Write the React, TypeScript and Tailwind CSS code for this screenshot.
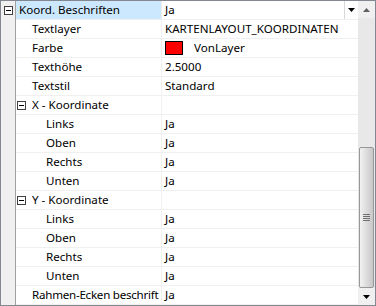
import { ReactNode } from 'react';

type Row = {
  label: string;
  value?: ReactNode;
  indent: number;
  toggle?: 'strip' | 'inline';
  selected?: boolean;
  tight?: boolean;
};

const rows: Row[] = [
  { label: 'Koord. Beschriften', value: 'Ja', indent: 3, toggle: 'strip', selected: true },
  { label: 'Textlayer', value: 'KARTENLAYOUT_KOORDINATEN', indent: 16 },
  { label: 'Farbe', value: 'swatch', indent: 16 },
  { label: 'Texthöhe', value: '2.5000', indent: 16 },
  { label: 'Textstil', value: 'Standard', indent: 16 },
  { label: 'X - Koordinate', indent: 16, toggle: 'inline' },
  { label: 'Links', value: 'Ja', indent: 30 },
  { label: 'Oben', value: 'Ja', indent: 30 },
  { label: 'Rechts', value: 'Ja', indent: 30 },
  { label: 'Unten', value: 'Ja', indent: 30 },
  { label: 'Y - Koordinate', indent: 16, toggle: 'inline' },
  { label: 'Links', value: 'Ja', indent: 30 },
  { label: 'Oben', value: 'Ja', indent: 30 },
  { label: 'Rechts', value: 'Ja', indent: 30 },
  { label: 'Unten', value: 'Ja', indent: 30 },
  { label: 'Rahmen-Ecken beschrift', value: 'Ja', indent: 16, tight: true },
];

function MinusBox() {
  return (
    <span className="flex items-center justify-center w-[9px] h-[9px] border border-[#404040] bg-white">
      <span className="block w-[5px] h-px bg-black" />
    </span>
  );
}

function ArrowDown() {
  return (
    <svg width="7" height="4" viewBox="0 0 7 4">
      <path d="M0 0h7L3.5 4z" fill="#000" />
    </svg>
  );
}

export default function App() {
  return (
    <div
      className="w-[376px] h-[306px] border border-[#828790] bg-white flex overflow-hidden text-[11.6px] text-black"
      style={{ fontFamily: '"Noto Sans", "DejaVu Sans", sans-serif' }}
    >
      <div className="flex-1 flex flex-col">
        {rows.map((row, i) => (
          <div key={i} className="flex h-[19px] shrink-0">
            <div className="w-[15px] shrink-0 bg-[#f0f0f0] border-r border-[#a0a0a0] flex items-center justify-center">
              {row.toggle === 'strip' && <MinusBox />}
            </div>
            <div
              className={
                'w-[146px] shrink-0 flex items-center border-r border-b border-[#f0f0f0] whitespace-nowrap overflow-hidden ' +
                (row.selected ? 'bg-[#cce8ff]' : '')
              }
              style={{ paddingLeft: row.indent }}
            >
              {row.toggle === 'inline' && (
                <span className="mr-[6px] -ml-[15px]">
                  <MinusBox />
                </span>
              )}
              <span className={'leading-none ' + (row.tight ? 'tracking-[-0.25px]' : '')}>{row.label}</span>
            </div>
            {row.selected ? (
              <div className="flex-1 flex items-stretch border-b border-[#f0f0f0]">
                <div className="flex-1 flex items-center pl-[3px]">{row.value}</div>
                <div className="w-[14px] border-l border-[#d8d8d8] flex items-center justify-center">
                  <ArrowDown />
                </div>
              </div>
            ) : (
              <div className="flex-1 flex items-center pl-[3px] border-b border-[#f0f0f0] whitespace-nowrap overflow-hidden">
                {row.value === 'swatch' ? (
                  <>
                    <span className="w-[18px] h-[14px] bg-[#ff0000] border border-black mr-[11px]" />
                    <span>VonLayer</span>
                  </>
                ) : (
                  row.value
                )}
              </div>
            )}
          </div>
        ))}
      </div>
      <div className="w-[17px] shrink-0 bg-[#e8e8e8] flex flex-col">
        <div className="h-[17px] flex items-center justify-center bg-[#f0f0f0]">
          <svg width="7" height="4" viewBox="0 0 7 4">
            <path d="M0 4h7L3.5 0z" fill="#606060" />
          </svg>
        </div>
        <div className="h-[129px]" />
        <div className="flex-1 mx-px rounded-[2px] border border-[#979797] bg-gradient-to-r from-[#f2f2f2] via-[#dcdcdc] to-[#c8c8c8] flex items-center justify-center">
          <div className="flex flex-col gap-px">
            <span className="block w-[7px] h-px bg-[#707070]" />
            <span className="block w-[7px] h-px bg-[#707070]" />
            <span className="block w-[7px] h-px bg-[#707070]" />
            <span className="block w-[7px] h-px bg-[#707070]" />
          </div>
        </div>
        <div className="h-[17px] flex items-center justify-center bg-[#f0f0f0]">
          <ArrowDown />
        </div>
      </div>
    </div>
  );
}
